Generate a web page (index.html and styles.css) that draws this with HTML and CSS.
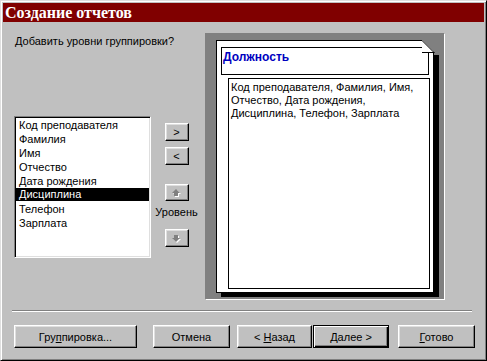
FILE: index.html
```html
<!DOCTYPE html>
<html lang="ru">
<head>
    <meta charset="UTF-8">
    <title>Создание отчетов</title>
    <link rel="stylesheet" href="styles.css">
</head>
<body>
    <div class="window">
        <div class="titlebar">Создание отчетов</div>

        <div class="main">
            <div class="left">
                <p class="prompt">Добавить уровни группировки?</p>
                <div class="picker">
                    <ul class="fields">
                        <li>Код преподавателя</li>
                        <li>Фамилия</li>
                        <li>Имя</li>
                        <li>Отчество</li>
                        <li>Дата рождения</li>
                        <li class="selected">Дисциплина</li>
                        <li>Телефон</li>
                        <li>Зарплата</li>
                    </ul>
                    <div class="movers">
                        <button class="btn mover">&gt;</button>
                        <button class="btn mover less">&lt;</button>
                        <button class="btn mover up" disabled>
                            <svg width="9" height="9" viewBox="0 0 9 9">
                                <path d="M5 2 L9 6 L7 6 L7 9 L3 9 L3 6 L1 6 Z" fill="#fff"/>
                                <path d="M4 1 L8 5 L6 5 L6 8 L2 8 L2 5 L0 5 Z" fill="#808080"/>
                            </svg>
                        </button>
                        <span class="level">Уровень</span>
                        <button class="btn mover down" disabled>
                            <svg width="9" height="9" viewBox="0 0 9 9">
                                <path d="M5 9 L9 5 L7 5 L7 2 L3 2 L3 5 L1 5 Z" fill="#fff"/>
                                <path d="M4 8 L8 4 L6 4 L6 1 L2 1 L2 4 L0 4 Z" fill="#808080"/>
                            </svg>
                        </button>
                    </div>
                </div>
            </div>

            <div class="preview">
                <div class="page">
                    <div class="group-head">Должность</div>
                    <div class="detail">Код преподавателя, Фамилия, Имя,<br>Отчество, Дата рождения,<br>Дисциплина, Телефон, Зарплата</div>
                    <svg class="fold" width="18" height="16" viewBox="0 0 18 16">
                        <polygon points="1,0 18,0 18,15 13,15 13,12" fill="#808080"/>
                        <polygon points="1,0 1,12 13,12" fill="#fff"/>
                        <path d="M1 0.5 L13 12.5 M1 12.5 H13.5" stroke="#000" stroke-width="1" fill="none"/>
                    </svg>
                </div>
            </div>
        </div>

        <div class="separator"></div>

        <div class="actions">
            <button class="btn grouping"><span>Гру<u>п</u>пировка...</span></button>
            <button class="btn cancel"><span>Отмена</span></button>
            <button class="btn back"><span>&lt; <u>Н</u>азад</span></button>
            <button class="btn next default"><span><u>Д</u>алее &gt;</span></button>
            <button class="btn finish"><span><u>Г</u>отово</span></button>
        </div>
    </div>
</body>
</html>
```

FILE: styles.css
```css
body {
    margin: 0;
    font-family: "Liberation Sans", Arial, sans-serif;
    font-size: 11px;
    color: #000;
}
.window {
    width: 487px;
    height: 361px;
    box-sizing: border-box;
    background: #c0c0c0;
    border: 1px solid;
    border-color: #dfdfdf #000 #000 #dfdfdf;
    box-shadow: inset 1px 1px #fff, inset -1px -1px #808080;
    padding: 2px;
}
.titlebar {
    height: 19px;
    line-height: 19px;
    background: #800000;
    color: #fff;
    font-family: "Liberation Serif", "Times New Roman", serif;
    font-weight: bold;
    font-size: 16px;
    padding-left: 2px;
    white-space: nowrap;
}
.main {
    display: flex;
    padding: 11px 0 0 11px;
}
.left {
    width: 191px;
}
.prompt {
    margin: 2px 0 0 1px;
    line-height: 13px;
}
.picker {
    display: flex;
    align-items: flex-start;
    margin-top: 68px;
}
.fields {
    list-style: none;
    margin: 0;
    padding: 0;
    width: 137px;
    height: 142px;
    box-sizing: border-box;
    background: #fff;
    border: 1px solid;
    border-color: #808080 #fff #fff #808080;
    box-shadow: inset 1px 1px #000, inset -1px -1px #dfdfdf;
    padding: 1px;
}
.fields li {
    height: 14px;
    line-height: 14px;
    padding-left: 3px;
    white-space: nowrap;
}
.fields li.selected {
    background: #000;
    color: #fff;
    height: 13px;
    line-height: 13px;
    margin-bottom: 1px;
}
.movers {
    width: 51px;
    display: flex;
    flex-direction: column;
    align-items: center;
    padding-top: 7px;
}
.btn {
    font-family: "Liberation Sans", Arial, sans-serif;
    font-size: 11px;
    color: #000;
    background: #c0c0c0;
    border: 1px solid;
    border-color: #fff #000 #000 #fff;
    box-shadow: inset -1px -1px #808080, inset 1px 1px #dfdfdf;
    padding: 0;
    height: 23px;
    box-sizing: border-box;
    display: flex;
    align-items: center;
    justify-content: center;
    white-space: pre;
}
.btn u {
    text-decoration: underline;
}
.mover {
    width: 24px;
    height: 18px;
}
.mover.less {
    margin-top: 6px;
}
.mover.up {
    margin-top: 19px;
    height: 17px;
}
.level {
    margin-top: 5px;
    line-height: 13px;
    white-space: nowrap;
}
.mover.down {
    margin-top: 10px;
}
.preview {
    width: 240px;
    height: 267px;
    box-sizing: border-box;
    background: #808080;
    border: 1px solid;
    border-color: #808080 #fff #fff #808080;
    padding: 6px 0 0 10px;
}
.page {
    position: relative;
    width: 218px;
    height: 253px;
    box-sizing: border-box;
    background: #fff;
    border: 1px solid #000;
    box-shadow: 5px 4px 0 #000;
    padding: 6px 0 0 4px;
}
.group-head {
    width: 208px;
    height: 28px;
    box-sizing: border-box;
    border: 1px solid #000;
    color: #0000c0;
    font-weight: bold;
    font-size: 12px;
    line-height: 14px;
    padding: 2px 0 0 1px;
}
.detail {
    margin: 3px 0 0 7px;
    width: 202px;
    height: 211px;
    box-sizing: border-box;
    border: 1px solid #000;
    line-height: 13px;
    padding: 2px 0 0 2px;
    white-space: nowrap;
}
.fold {
    position: absolute;
    top: -1px;
    right: -6px;
}
.separator {
    margin: 10px 0 0 9px;
    width: 460px;
    border-top: 1px solid #808080;
    border-bottom: 1px solid #fff;
}
.actions {
    display: flex;
    margin-top: 13px;
    padding-left: 11px;
}
.grouping {
    width: 123px;
}
.cancel {
    width: 77px;
    margin-left: 16px;
}
.back {
    width: 75px;
    margin-left: 7px;
}
.next {
    width: 76px;
    margin-left: 1px;
}
.default {
    border-color: #000;
    box-shadow: inset 1px 1px #fff, inset -1px -1px #000, inset -2px -2px #808080;
}
.finish {
    width: 77px;
    margin-left: 9px;
}
```
